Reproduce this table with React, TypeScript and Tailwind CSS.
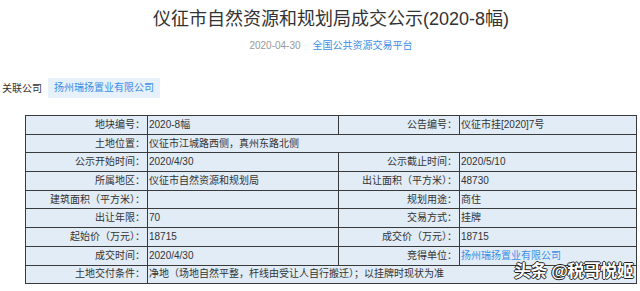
import { FC } from "react";

type Cell = { label: string; value: string; link?: boolean };

const rows: (Cell[] | Cell)[] = [
    [{ label: "地块编号：", value: "2020-8幅" }, { label: "公告编号：", value: "仪征市挂[2020]7号" }],
    { label: "土地位置：", value: "仪征市江城路西侧，真州东路北侧" },
    [{ label: "公示开始时间：", value: "2020/4/30" }, { label: "公示截止时间：", value: "2020/5/10" }],
    [{ label: "所属地区：", value: "仪征市自然资源和规划局" }, { label: "出让面积（平方米）：", value: "48730" }],
    [{ label: "建筑面积（平方米）：", value: "" }, { label: "规划用途：", value: "商住" }],
    [{ label: "出让年限：", value: "70" }, { label: "交易方式：", value: "挂牌" }],
    [{ label: "起始价（万元）：", value: "18715" }, { label: "成交价（万元）：", value: "18715" }],
    [{ label: "成交时间：", value: "2020/4/30" }, { label: "竞得单位：", value: "扬州瑞扬置业有限公司", link: true }],
    { label: "土地交付条件：", value: "净地（场地自然平整，杆线由受让人自行搬迁）；以挂牌时现状为准" },
]

const labelCls = "border border-[#3a3a3a] text-right pr-[2px] py-0 whitespace-nowrap"
const valueCls = "border border-[#3a3a3a] text-left pl-[1px] py-0 whitespace-nowrap"

const App: FC = () => {
    return <div className="relative w-[640px] h-[291px] bg-white overflow-hidden text-[#333] font-['Liberation_Sans','Noto_Sans_CJK_SC',sans-serif]">
        <div className="pl-[22px] pt-[7px] text-center">
            <h1 className="text-[18px] leading-[24px] text-[#333]">仪征市自然资源和规划局成交公示(2020-8幅)</h1>
            <p className="mt-[8px] text-[10px] leading-[13px]">
                <span className="text-[#999]">2020-04-30</span>
                <span className="ml-[12px] text-[#3a8ee6]">全国公共资源交易平台</span>
            </p>
        </div>

        <div className="flex items-center mt-[26px] pl-[2px] text-[10px]">
            <span className="text-[#333]">关联公司</span>
            <span className="ml-[6px] px-[6px] py-[4px] leading-[12px] bg-[#e6f1fc] text-[#3a8ee6]">扬州瑞扬置业有限公司</span>
        </div>

        <table className="ml-[25px] mt-[17px] border-collapse bg-[#e1ecf7] text-[10px] text-[#333] table-fixed w-[611px]">
            <colgroup>
                <col className="w-[122px]" />
                <col className="w-[191px]" />
                <col className="w-[121px]" />
                <col className="w-[177px]" />
            </colgroup>
            <tbody>
                {rows.map((row, i) => {
                    if (Array.isArray(row)) {
                        return <tr key={i} className="h-[18.7px] leading-[12px]">
                            {row.map((c, j) => [
                                <td key={j + "l"} className={labelCls}>{c.label}</td>,
                                <td key={j + "v"} className={valueCls + (c.link ? " text-[#3a8ee6]" : "")}>{c.value}</td>
                            ])}
                        </tr>
                    }
                    return <tr key={i} className="h-[18.7px] leading-[12px]">
                        <td className={labelCls}>{row.label}</td>
                        <td colSpan={3} className={valueCls}>{row.value}</td>
                    </tr>
                })}
            </tbody>
        </table>

        {/* watermark */}
        <div className="absolute left-[514px] top-[261px] whitespace-nowrap text-[17px] leading-[22px] font-bold text-white tracking-[-0.5px] [text-shadow:1px_0_0_#222,-1px_0_0_#222,0_1px_0_#222,0_-1px_0_#222]">
            头条 @税哥悦姬
        </div>
    </div>
}

export default App
